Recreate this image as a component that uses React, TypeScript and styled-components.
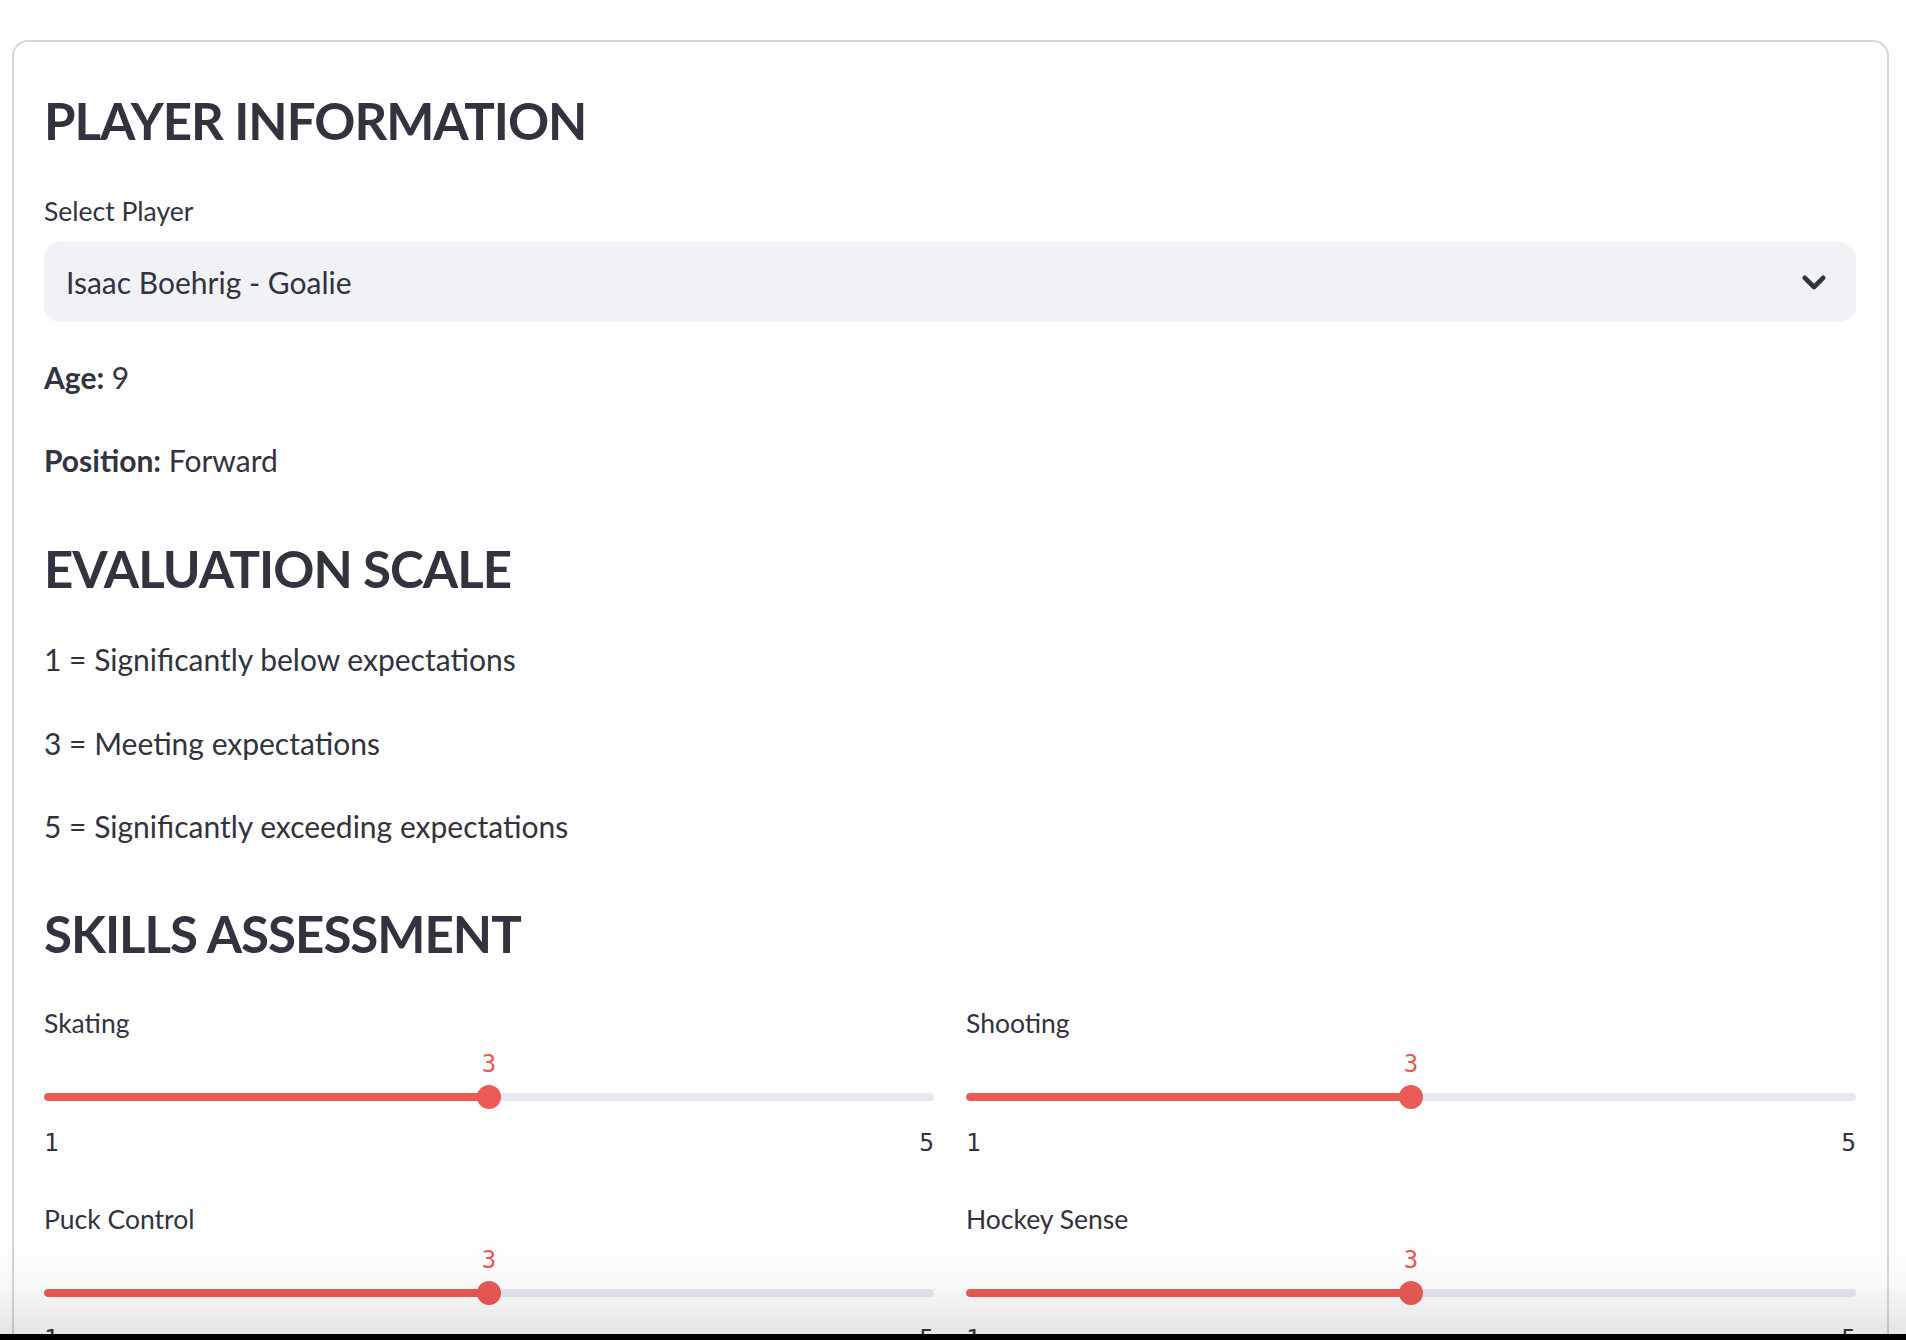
import React from "react";
import styled, { createGlobalStyle } from "styled-components";

const GlobalStyle = createGlobalStyle`
  html, body {
    margin: 0;
    padding: 0;
    background: #ffffff;
    overflow: hidden;
  }
  body {
    font-family: Lato, "Open Sans", sans-serif;
    color: #31333f;
  }
  * { box-sizing: border-box; }
`;

const RED = "#eb5a55";

const Page = styled.div`
  width: 1906px;
  height: 1340px;
  position: relative;
  overflow: hidden;
`;

const Card = styled.section`
  margin: 40px 17px 0 12px;
  border: 2px solid rgba(49, 51, 63, 0.2);
  border-radius: 16px;
  padding: 30px 31px 200px 30px;
  display: flex;
  flex-direction: column;
`;

const Heading = styled.h3<{ $mt: number }>`
  margin: ${(p) => p.$mt}px 0 0 0;
  font-size: 51px;
  line-height: 61px;
  height: 61px;
  font-weight: 700;
  color: #31333f;
  letter-spacing: -1px;
`;

const FieldLabel = styled.label<{ $mt: number }>`
  display: block;
  margin-top: ${(p) => p.$mt}px;
  font-size: 26.5px;
  line-height: 36px;
  height: 36px;
  color: #31333f;
`;

const SelectBox = styled.div`
  margin-top: 13px;
  height: 80px;
  background: #f0f2f6;
  border-radius: 16px;
  display: flex;
  align-items: center;
  justify-content: space-between;
  padding: 0 22px 0 22px;
`;

const SelectValue = styled.span`
  font-size: 30px;
  line-height: 38px;
  color: #31333f;
`;

const Para = styled.p<{ $mt: number }>`
  margin: ${(p) => p.$mt}px 0 0 0;
  font-size: 30px;
  line-height: 40px;
  height: 40px;
  color: #31333f;
`;

const Strong = styled.strong`
  font-weight: 700;
`;

const SliderGrid = styled.div`
  margin-top: 41px;
  display: grid;
  grid-template-columns: 1fr 1fr;
  column-gap: 32px;
  row-gap: 43px;
`;

const SliderBlock = styled.div`
  display: flex;
  flex-direction: column;
`;

const SliderLabel = styled.div`
  font-size: 26.5px;
  line-height: 36px;
  height: 36px;
  color: #31333f;
`;

const ValueRow = styled.div`
  position: relative;
  height: 30px;
  margin-top: 8px;
`;

const ThumbValue = styled.span`
  position: absolute;
  top: 0;
  transform: translateX(-50%);
  font-family: "DejaVu Sans Mono", "Liberation Mono", monospace;
  font-size: 24px;
  line-height: 30px;
  color: ${RED};
`;

const TrackWrap = styled.div`
  position: relative;
  height: 24px;
  margin-top: 6px;
  display: flex;
  align-items: center;
`;

const Rail = styled.div`
  position: relative;
  width: 100%;
  height: 8px;
  border-radius: 4px;
  background: #e6e9ef;
  overflow: hidden;
`;

const Fill = styled.div`
  height: 100%;
  background: ${RED};
  border-radius: 4px 0 0 4px;
`;

const Thumb = styled.div`
  position: absolute;
  top: 0;
  width: 24px;
  height: 24px;
  border-radius: 50%;
  background: ${RED};
  transform: translateX(-50%);
`;

const Ticks = styled.div`
  margin-top: 19px;
  height: 30px;
  display: flex;
  justify-content: space-between;
  font-family: "DejaVu Sans Mono", "Liberation Mono", monospace;
  font-size: 24.5px;
  line-height: 30px;
  color: #31333f;
`;

const BottomShade = styled.div`
  position: absolute;
  left: 0;
  right: 0;
  bottom: 6px;
  height: 92px;
  background: linear-gradient(
    to bottom,
    rgba(0, 0, 0, 0) 0%,
    rgba(0, 0, 0, 0.03) 50%,
    rgba(0, 0, 0, 0.1) 100%
  );
  pointer-events: none;
`;

const BottomBar = styled.div`
  position: absolute;
  left: 0;
  right: 0;
  bottom: 0;
  height: 6px;
  background: #000;
`;

type SliderProps = { label: string; value: number; min: number; max: number };

function Slider({ label, value, min, max }: SliderProps) {
  const pct = ((value - min) / (max - min)) * 100;
  return (
    <SliderBlock>
      <SliderLabel>{label}</SliderLabel>
      <ValueRow>
        <ThumbValue style={{ left: `${pct}%` }}>{value}</ThumbValue>
      </ValueRow>
      <TrackWrap>
        <Rail>
          <Fill style={{ width: `${pct}%` }} />
        </Rail>
        <Thumb style={{ left: `${pct}%` }} />
      </TrackWrap>
      <Ticks>
        <span>{min}</span>
        <span>{max}</span>
      </Ticks>
    </SliderBlock>
  );
}

function Chevron() {
  return (
    <svg width="40" height="40" viewBox="0 0 24 24" fill="none">
      <path
        d="m6.5 9.5 5.5 5.5 5.5-5.5"
        stroke="#31333f"
        strokeWidth="2.8"
        strokeLinecap="round"
        strokeLinejoin="round"
      />
    </svg>
  );
}

const skills: SliderProps[] = [
  { label: "Skating", value: 3, min: 1, max: 5 },
  { label: "Shooting", value: 3, min: 1, max: 5 },
  { label: "Puck Control", value: 3, min: 1, max: 5 },
  { label: "Hockey Sense", value: 3, min: 1, max: 5 },
];

export default function App() {
  return (
    <Page>
      <GlobalStyle />
      <Card>
        <Heading $mt={18}>PLAYER INFORMATION</Heading>
        <FieldLabel $mt={42}>Select Player</FieldLabel>
        <SelectBox>
          <SelectValue>Isaac Boehrig - Goalie</SelectValue>
          <Chevron />
        </SelectBox>
        <Para $mt={35}>
          <Strong>Age:</Strong> 9
        </Para>
        <Para $mt={43}>
          <Strong>Position:</Strong> Forward
        </Para>
        <Heading $mt={58}>EVALUATION SCALE</Heading>
        <Para $mt={40}>1 = Significantly below expectations</Para>
        <Para $mt={44}>3 = Meeting expectations</Para>
        <Para $mt={43}>5 = Significantly exceeding expectations</Para>
        <Heading $mt={57}>SKILLS ASSESSMENT</Heading>
        <SliderGrid>
          {skills.map((s) => (
            <Slider key={s.label} {...s} />
          ))}
        </SliderGrid>
      </Card>
      <BottomShade />
      <BottomBar />
    </Page>
  );
}
